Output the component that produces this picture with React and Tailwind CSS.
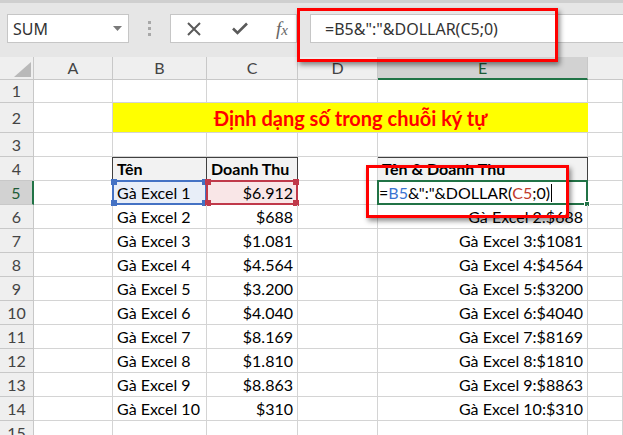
import React from 'react';

const ROWS = [
  ['Gà Excel 1', '$6.912', 'Gà Excel 1:$6912'],
  ['Gà Excel 2', '$688', 'Gà Excel 2:$688'],
  ['Gà Excel 3', '$1.081', 'Gà Excel 3:$1081'],
  ['Gà Excel 4', '$4.564', 'Gà Excel 4:$4564'],
  ['Gà Excel 5', '$3.200', 'Gà Excel 5:$3200'],
  ['Gà Excel 6', '$4.040', 'Gà Excel 6:$4040'],
  ['Gà Excel 7', '$8.169', 'Gà Excel 7:$8169'],
  ['Gà Excel 8', '$1.810', 'Gà Excel 8:$1810'],
  ['Gà Excel 9', '$8.863', 'Gà Excel 9:$8863'],
  ['Gà Excel 10', '$310', 'Gà Excel 10:$310'],
];

const cell = 'h-full border-r border-b border-[#d4d4d4] shrink-0';

// Row number on the left
const RowHead = ({ n, active }) => (
  <div
    className={`w-[34px] h-full shrink-0 flex items-center justify-center border-b border-[#c8c8c8] ${
      active ? 'bg-[#d2d2d2] border-r-2 border-r-[#217346] text-[#1e5b37]' : 'bg-[#efefef] border-r border-r-[#c8c8c8] text-[#444]'
    }`}
  >
    {n}
  </div>
);

const Corners = ({ color }) => (
  <>
    <span className={`absolute -left-[3px] -top-[3px] w-[6px] h-[6px] ${color}`} />
    <span className={`absolute -right-[3px] -top-[3px] w-[6px] h-[6px] ${color}`} />
    <span className={`absolute -left-[3px] -bottom-[3px] w-[6px] h-[6px] ${color}`} />
    <span className={`absolute -right-[3px] -bottom-[3px] w-[6px] h-[6px] ${color}`} />
  </>
);

const Toolbar = () => (
  <div className="h-[57px] bg-[#e6e6e6] border-t-[3px] border-[#cfcfcf] flex items-start pt-[11px]">
    {/* name box */}
    <div className="ml-[7px] w-[122px] h-[29px] bg-white border border-[#c6c6c6] flex items-center justify-between pl-[5px] pr-[6px] text-[16px] text-[#333] font-['Noto_Sans',sans-serif]">
      <span>SUM</span>
      <svg width="9" height="5" viewBox="0 0 9 5"><path d="M0 0h9L4.5 5z" fill="#7a7a7a" /></svg>
    </div>
    <div className="w-[41px] h-[29px] flex flex-col items-center justify-center gap-[3px]">
      <span className="w-[3px] h-[3px] bg-[#a8a8a8]" />
      <span className="w-[3px] h-[3px] bg-[#a8a8a8]" />
      <span className="w-[3px] h-[3px] bg-[#a8a8a8]" />
    </div>
    {/* cancel / enter / fx */}
    <div className="w-[127px] h-[29px] bg-white border border-[#c6c6c6] flex items-center">
      <svg className="ml-[16px]" width="14" height="14" viewBox="0 0 14 14">
        <path d="M1 1l12 12M13 1L1 13" stroke="#5a5a5a" strokeWidth="2" />
      </svg>
      <svg className="ml-[31px]" width="16" height="13" viewBox="0 0 16 13">
        <path d="M1 6.5l4.5 4.5L15 1.5" stroke="#5a5a5a" strokeWidth="2.6" fill="none" />
      </svg>
      <span className="ml-[28px] text-[19px] leading-none text-[#666] italic font-['Liberation_Serif',serif]">
        f<span className="text-[15px]">x</span>
      </span>
    </div>
    <div className="ml-[13px] flex-1 h-[29px] bg-white border border-r-0 border-[#c6c6c6] flex items-center pl-[14px] text-[16px] text-[#333] font-['Noto_Sans',sans-serif]">
      =B5&amp;":"&amp;DOLLAR(C5;0)
    </div>
  </div>
);

const ColHeads = () => (
  <div className="h-[23px] flex text-[16px] text-[#444] bg-[#efefef]">
    <div className="w-[34px] h-full shrink-0 border-r border-b border-[#c8c8c8] relative">
      <svg className="absolute left-[14px] top-[5px]" width="17" height="15" viewBox="0 0 17 15">
        <path d="M17 0v15H0z" fill="#b9b9b9" />
      </svg>
    </div>
    <div className="w-[79px] h-full shrink-0 border-r border-b border-[#c8c8c8] flex items-center justify-center">A</div>
    <div className="w-[94px] h-full shrink-0 border-r border-b border-[#c8c8c8] flex items-center justify-center">B</div>
    <div className="w-[91px] h-full shrink-0 border-r border-b border-[#c8c8c8] flex items-center justify-center">C</div>
    <div className="w-[80px] h-full shrink-0 border-r border-b border-[#c8c8c8] flex items-center justify-center">D</div>
    <div className="w-[210px] h-full shrink-0 border-r border-[#c8c8c8] border-b-2 border-b-[#217346] bg-[#d2d2d2] flex items-center justify-center text-[#1e5b37]">E</div>
    <div className="flex-1 h-full border-b border-[#c8c8c8]" />
  </div>
);

export default function App() {
  return (
    <div className="w-[623px] h-[435px] overflow-hidden relative bg-white font-['Lato',sans-serif] text-[16px] text-black">
      <Toolbar />
      <ColHeads />

      {/* row 1 */}
      <div className="h-[23px] flex">
        <RowHead n={1} />
        <div className={`${cell} w-[79px]`} />
        <div className={`${cell} w-[94px]`} />
        <div className={`${cell} w-[91px]`} />
        <div className={`${cell} w-[80px]`} />
        <div className={`${cell} w-[210px]`} />
        <div className={`${cell} flex-1`} />
      </div>

      {/* row 2 - title */}
      <div className="h-[30px] flex">
        <RowHead n={2} />
        <div className={`${cell} w-[79px]`} />
        <div className="h-full w-[475px] shrink-0 bg-[#ffff00] border-b border-[#d4d4d4] flex items-center justify-center text-[#ff0000] font-bold text-[20px]">
          Định dạng số trong chuỗi ký tự
        </div>
        <div className={`${cell} flex-1`} />
      </div>

      {/* row 3 */}
      <div className="h-[24px] flex">
        <RowHead n={3} />
        <div className={`${cell} w-[79px]`} />
        <div className={`${cell} w-[94px]`} />
        <div className={`${cell} w-[91px]`} />
        <div className={`${cell} w-[80px]`} />
        <div className={`${cell} w-[210px]`} />
        <div className={`${cell} flex-1`} />
      </div>

      {/* row 4 - table headers */}
      <div className="h-[24px] flex">
        <RowHead n={4} />
        <div className={`${cell} w-[79px]`} />
        <div className="h-full w-[94px] shrink-0 bg-[#f2f2f2] border-t border-l border-r border-b border-[#404040] -ml-px w-[95px] flex items-center pl-[4px] font-bold">Tên</div>
        <div className="h-full w-[91px] shrink-0 bg-[#f2f2f2] border-t border-r border-b border-[#404040] flex items-center pl-[4px] font-bold">Doanh Thu</div>
        <div className={`${cell} w-[80px]`} />
        <div className="h-full w-[210px] shrink-0 bg-[#f2f2f2] border-t border-r border-[#404040] border-b border-b-[#d4d4d4] flex items-center pl-[4px] font-bold">Tên &amp; Doanh Thu</div>
        <div className={`${cell} flex-1`} />
      </div>

      {ROWS.map((r, i) => {
        const n = i + 5;
        const first = i === 0;
        return (
          <div key={n} className="h-[24px] flex">
            <RowHead n={n} active={first} />
            <div className={`${cell} w-[79px]`} />
            <div className={`${cell} w-[94px] relative flex items-center pl-[4px] ${first ? 'bg-[#e8eef8]' : ''}`}>
              {r[0]}
              {first && (
                <div className="absolute -left-px -top-px -right-px -bottom-px border-2 border-[#4472c4]">
                  <Corners color="bg-[#4472c4]" />
                </div>
              )}
            </div>
            <div className={`${cell} w-[91px] relative flex items-center justify-end pr-[4px] ${first ? 'bg-[#f9e6e7]' : ''}`}>
              {r[1]}
              {first && (
                <div className="absolute -left-px -top-px -right-px -bottom-px border-2 border-[#c0394a]">
                  <Corners color="bg-[#c0394a]" />
                </div>
              )}
            </div>
            <div className={`${cell} w-[80px]`} />
            <div className={`${cell} w-[210px] relative flex items-center ${first ? 'justify-start pl-[1px]' : 'justify-end pr-[4px]'}`}>
              {first ? (
                <>
                  <span>=</span>
                  <span className="text-[#3b74d1]">B5</span>
                  <span>&amp;":"&amp;DOLLAR(</span>
                  <span className="text-[#c0392b]">C5</span>
                  <span>;0)</span>
                  <span className="w-px h-[18px] bg-black ml-[1px]" />
                  <div className="absolute -left-px -top-px -right-px -bottom-px border-2 border-[#217346]">
                    <span className="absolute -right-[4px] -bottom-[4px] w-[6px] h-[6px] bg-[#217346] border border-white" />
                  </div>
                </>
              ) : (
                r[2]
              )}
            </div>
            <div className={`${cell} flex-1`} />
          </div>
        );
      })}

      {/* row 15 */}
      <div className="h-[24px] flex">
        <RowHead n={15} />
        <div className={`${cell} w-[79px]`} />
        <div className={`${cell} w-[94px]`} />
        <div className={`${cell} w-[91px]`} />
        <div className={`${cell} w-[80px]`} />
        <div className={`${cell} w-[210px]`} />
        <div className={`${cell} flex-1`} />
      </div>

      {/* red annotation boxes */}
      <div className="absolute left-[297px] top-[8px] w-[261px] h-[54px] border-[3px] border-[#ff0000] shadow-[2px_3px_5px_rgba(0,0,0,0.45)]" />
      <div className="absolute left-[366px] top-[165px] w-[203px] h-[53px] border-[3px] border-[#ff0000] shadow-[2px_3px_5px_rgba(0,0,0,0.45)]" />
    </div>
  );
}
